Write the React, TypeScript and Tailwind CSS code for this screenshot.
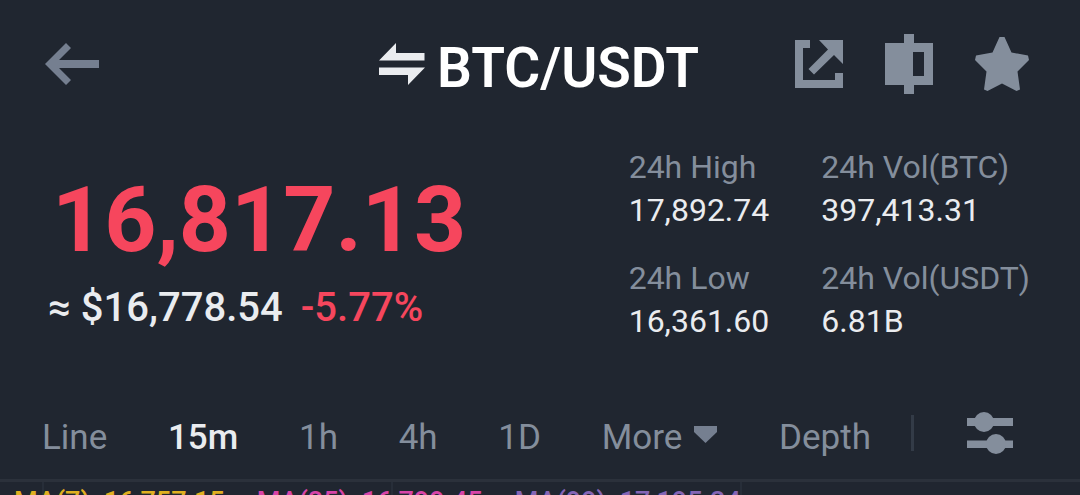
import React from "react";

const stats = [
  { label: "24h High", value: "17,892.74" },
  { label: "24h Vol(BTC)", value: "397,413.31" },
  { label: "24h Low", value: "16,361.60" },
  { label: "24h Vol(USDT)", value: "6.81B" },
];

function BackIcon() {
  return (
    <svg width="54" height="42" viewBox="0 0 54 42" fill="#757f90" aria-hidden="true">
      <path d="M0 21 21 0 26 5 14 17H54V25H14L26 37 21 42Z" />
    </svg>
  );
}

function SwapIcon() {
  return (
    <svg width="46" height="42" viewBox="0 0 46 42" fill="#eaecef" aria-hidden="true">
      <path d="M0 17.5 17 0V10H45.5V17.5ZM0 24.5H46L29 42V32H0Z" />
    </svg>
  );
}

function ShareIcon() {
  return (
    <svg width="48" height="48" viewBox="0 0 48 48" fill="#848e9c" aria-hidden="true">
      <path d="M0 0H15V8H8V40H40V33H48V48H0Z" />
      <path d="M24 0H48V24L39 15 19 34.500 13.500 29 33 9.500Z" />
    </svg>
  );
}

function CompareIcon() {
  return (
    <svg width="48" height="60" viewBox="0 0 48 60" fill="#848e9c" aria-hidden="true">
      <path fillRule="evenodd" d="M19 0H29V9H48V51H29V60H19V51H0V9H19ZM28 18V42H39V18Z" />
    </svg>
  );
}

function StarIcon() {
  return (
    <svg width="54" height="54" viewBox="0 0 54 54" fill="#848e9c" aria-hidden="true">
      <path d="M24.500 0H29.500L36.500 15.500 53 18.500 54 23 42.500 34.500 45 52.500 41.500 54 27 46.500 12.500 54 9 52.500 11.500 34.500 0 23 1 18.500 17.500 15.500Z" />
    </svg>
  );
}

function SettingsIcon() {
  return (
    <svg width="46" height="42" viewBox="0 0 46 42" fill="#848e9c" aria-hidden="true">
      <path d="M0 6H46V14H0ZM0 28.500H46V36H0Z" />
      <circle cx="17" cy="10" r="10" />
      <circle cx="29" cy="32" r="10" />
    </svg>
  );
}

export default function App() {
  return (
    <main className="flex h-screen flex-col overflow-hidden bg-[#202630] font-['Roboto','Liberation_Sans',sans-serif] text-[#eaecef]">
      <header className="grid grid-cols-[1fr_auto_1fr] items-center pt-8 pr-[51px] pl-[45px]">
        <button type="button" aria-label="Back" className="justify-self-start">
          <BackIcon />
        </button>
        <button type="button" className="flex items-center gap-3 pl-1">
          <SwapIcon />
          <h1 className="pt-2 text-[55px] leading-14 font-semibold text-white">BTC/USDT</h1>
        </button>
        <div className="flex items-center gap-[42px] justify-self-end">
          <button type="button" aria-label="Share">
            <ShareIcon />
          </button>
          <button type="button" aria-label="Compare">
            <CompareIcon />
          </button>
          <button type="button" aria-label="Favorite">
            <StarIcon />
          </button>
        </div>
      </header>

      <section className="flex items-start justify-between pt-[50px] pr-[50px] pl-12">
        <div className="pt-[26px]">
          <p className="pl-1 text-[91px] leading-24 font-bold text-[#f6465d]">16,817.13</p>
          <p className="flex gap-[18px] pt-4 text-[40px] leading-12 font-medium">
            <span>≈ $16,778.54</span>
            <span className="text-[#f6465d]">-5.77%</span>
          </p>
        </div>
        <dl className="grid grid-cols-[auto_auto] gap-x-[52px] gap-y-[25px]">
          {stats.map((s) => (
            <div key={s.label} className="text-[32px] leading-[43px]">
              <dt className="text-[#848e9c]">{s.label}</dt>
              <dd>{s.value}</dd>
            </div>
          ))}
        </dl>
      </section>

      <div className="flex items-center pt-[61px] pr-[67px] pb-[17px] pl-[42px]">
        <nav className="flex flex-1 items-center justify-between pt-[10px] text-[35px] leading-12 text-[#848e9c]">
          <button type="button">Line</button>
          <button type="button" className="font-medium text-[#eaecef]">15m</button>
          <button type="button">1h</button>
          <button type="button">4h</button>
          <button type="button">1D</button>
          <button type="button" className="flex items-center gap-3">
            More
            <svg width="24" height="24" viewBox="0 0 24 24" fill="#757f90" aria-hidden="true">
              <path d="M0 0H23V6L11.500 17 0 6Z" />
            </svg>
          </button>
          <button type="button">Depth</button>
        </nav>
        <div className="ml-10 h-9 w-[3px] bg-[#333b47]" />
        <button type="button" aria-label="Chart settings" className="ml-[53px]">
          <SettingsIcon />
        </button>
      </div>

      <section className="relative shrink-0 border-t-[3px] border-[#2b313b]">
        <svg className="absolute inset-0 h-full w-full" stroke="#272e39" strokeWidth="2" aria-hidden="true">
          <path d="M43 0V60M392 0V60M741 0V60" />
        </svg>
        <p className="relative flex gap-8 pt-[2px] pl-[14px] text-[27px] leading-9 font-medium">
          <span className="text-[#e0b020]">MA(7): 16,757.15</span>
          <span className="text-[#d844a8]">MA(25): 16,799.45</span>
          <span className="text-[#8465b5]">MA(99): 17,195.24</span>
        </p>
      </section>
    </main>
  );
}
